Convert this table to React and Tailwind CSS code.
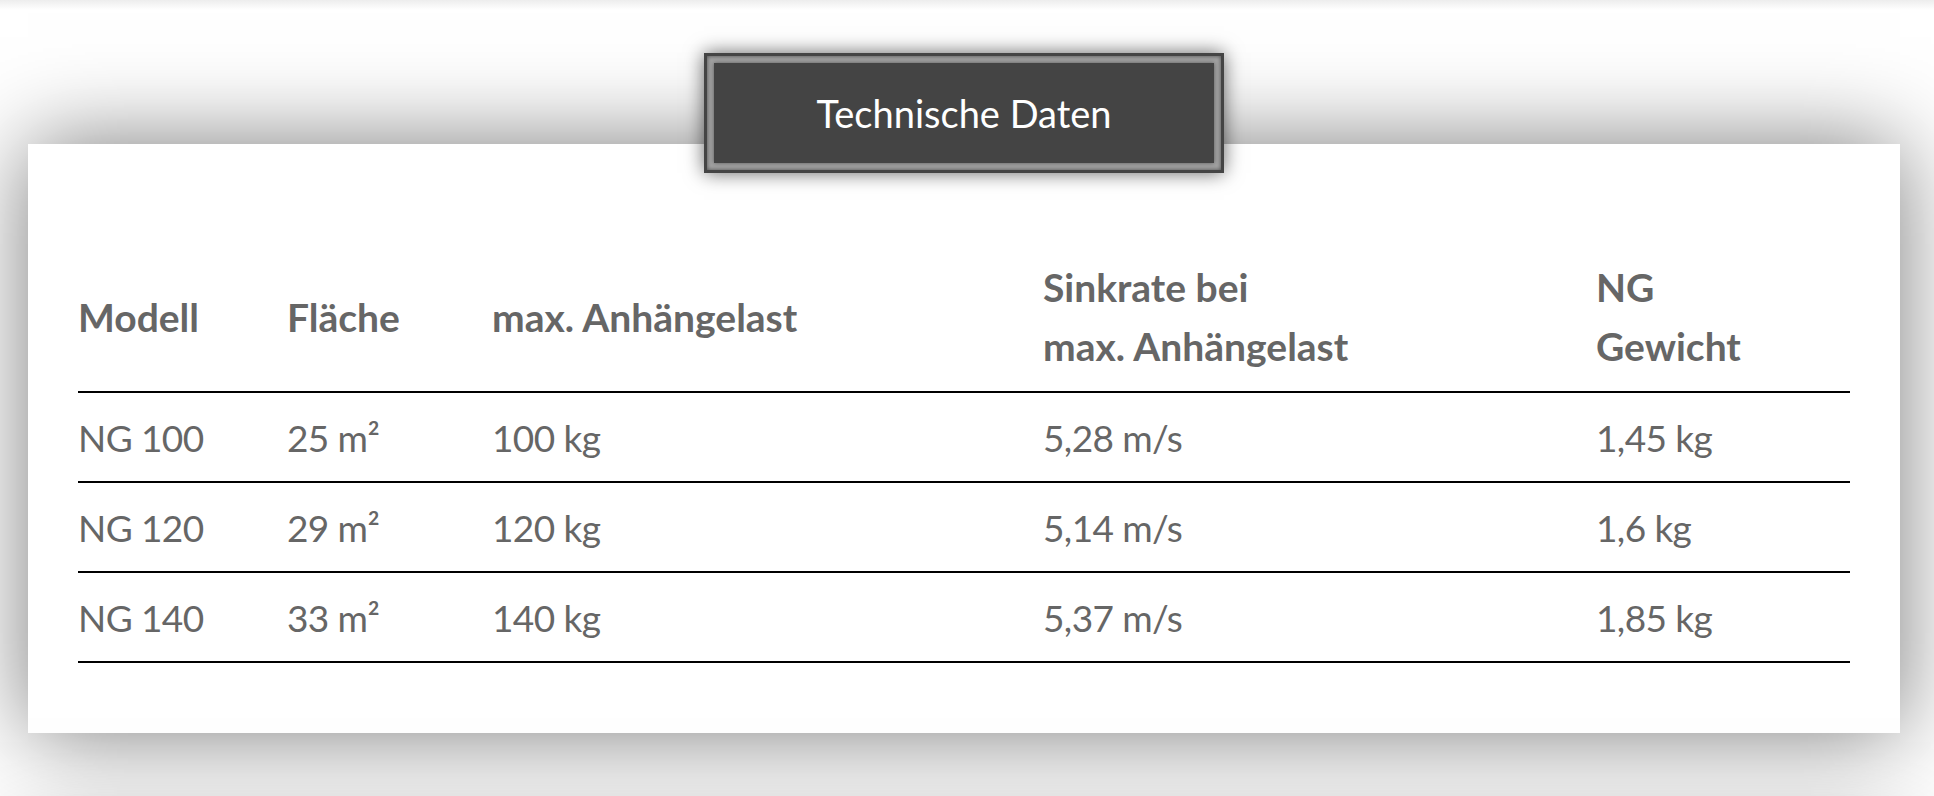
import React from 'react';

// Technische Daten – Tabelle mit Reiter oben
const rows = [
  { modell: 'NG 100', flaeche: '25 m²', last: '100 kg', sink: '5,28 m/s', gewicht: '1,45 kg' },
  { modell: 'NG 120', flaeche: '29 m²', last: '120 kg', sink: '5,14 m/s', gewicht: '1,6 kg' },
  { modell: 'NG 140', flaeche: '33 m²', last: '140 kg', sink: '5,37 m/s', gewicht: '1,85 kg' },
];

const cols = 'grid grid-cols-[209px_205px_551px_553px_254px]';

function Tab({ label }) {
  return (
    <div className="flex justify-center">
      <div className="relative z-10 -mb-[29px] border-[3px] border-[#444] bg-[#444] shadow-[0_0_18px_rgba(0,0,0,0.6)]">
        <div className="bg-[#a2a2a2] p-[7px] shadow-[inset_0_0_4px_rgba(0,0,0,0.55)]">
          <div className="flex h-[100px] w-[500px] items-center justify-center bg-[#444] text-[38px] text-white shadow-[0_0_4px_rgba(0,0,0,0.45)]">
            {label}
          </div>
        </div>
      </div>
    </div>
  );
}

export default function App() {
  return (
    <div className="h-[796px] overflow-hidden bg-white font-['Lato',sans-serif]">
      {/* Schatten der vorherigen Sektion */}
      <div className="h-[10px] bg-gradient-to-b from-[#ededed] to-white" />

      <section className="ml-[28px] w-[1872px] pt-[43px]">
        <Tab label="Technische Daten" />

        <div className="bg-white px-[50px] pt-[99px] pb-[70px] text-[#666] shadow-[0_0_88px_rgba(0,0,0,0.52)]">
          {/* Kopfzeile */}
          <div className={`${cols} h-[150px] items-center border-b-2 border-black text-[39px] font-bold leading-[59px]`}>
            <div>Modell</div>
            <div>Fläche</div>
            <div>max. Anhängelast</div>
            <div>
              Sinkrate bei
              <br />
              max. Anhängelast
            </div>
            <div>
              NG
              <br />
              Gewicht
            </div>
          </div>

          {rows.map((r) => (
            <div
              key={r.modell}
              className={`${cols} h-[90px] items-center border-b-2 border-black text-[37px] leading-[59px] tracking-[-0.6px]`}
            >
              <div>{r.modell}</div>
              <div>{r.flaeche}</div>
              <div>{r.last}</div>
              <div>{r.sink}</div>
              <div>{r.gewicht}</div>
            </div>
          ))}
        </div>
      </section>

      {/* nächste Sektion, nur der Schatten ragt ins Bild */}
      <div className="ml-[28px] mt-[116px] h-[400px] w-[1872px] bg-white shadow-[0_0_88px_rgba(0,0,0,0.52)]" />
    </div>
  );
}
